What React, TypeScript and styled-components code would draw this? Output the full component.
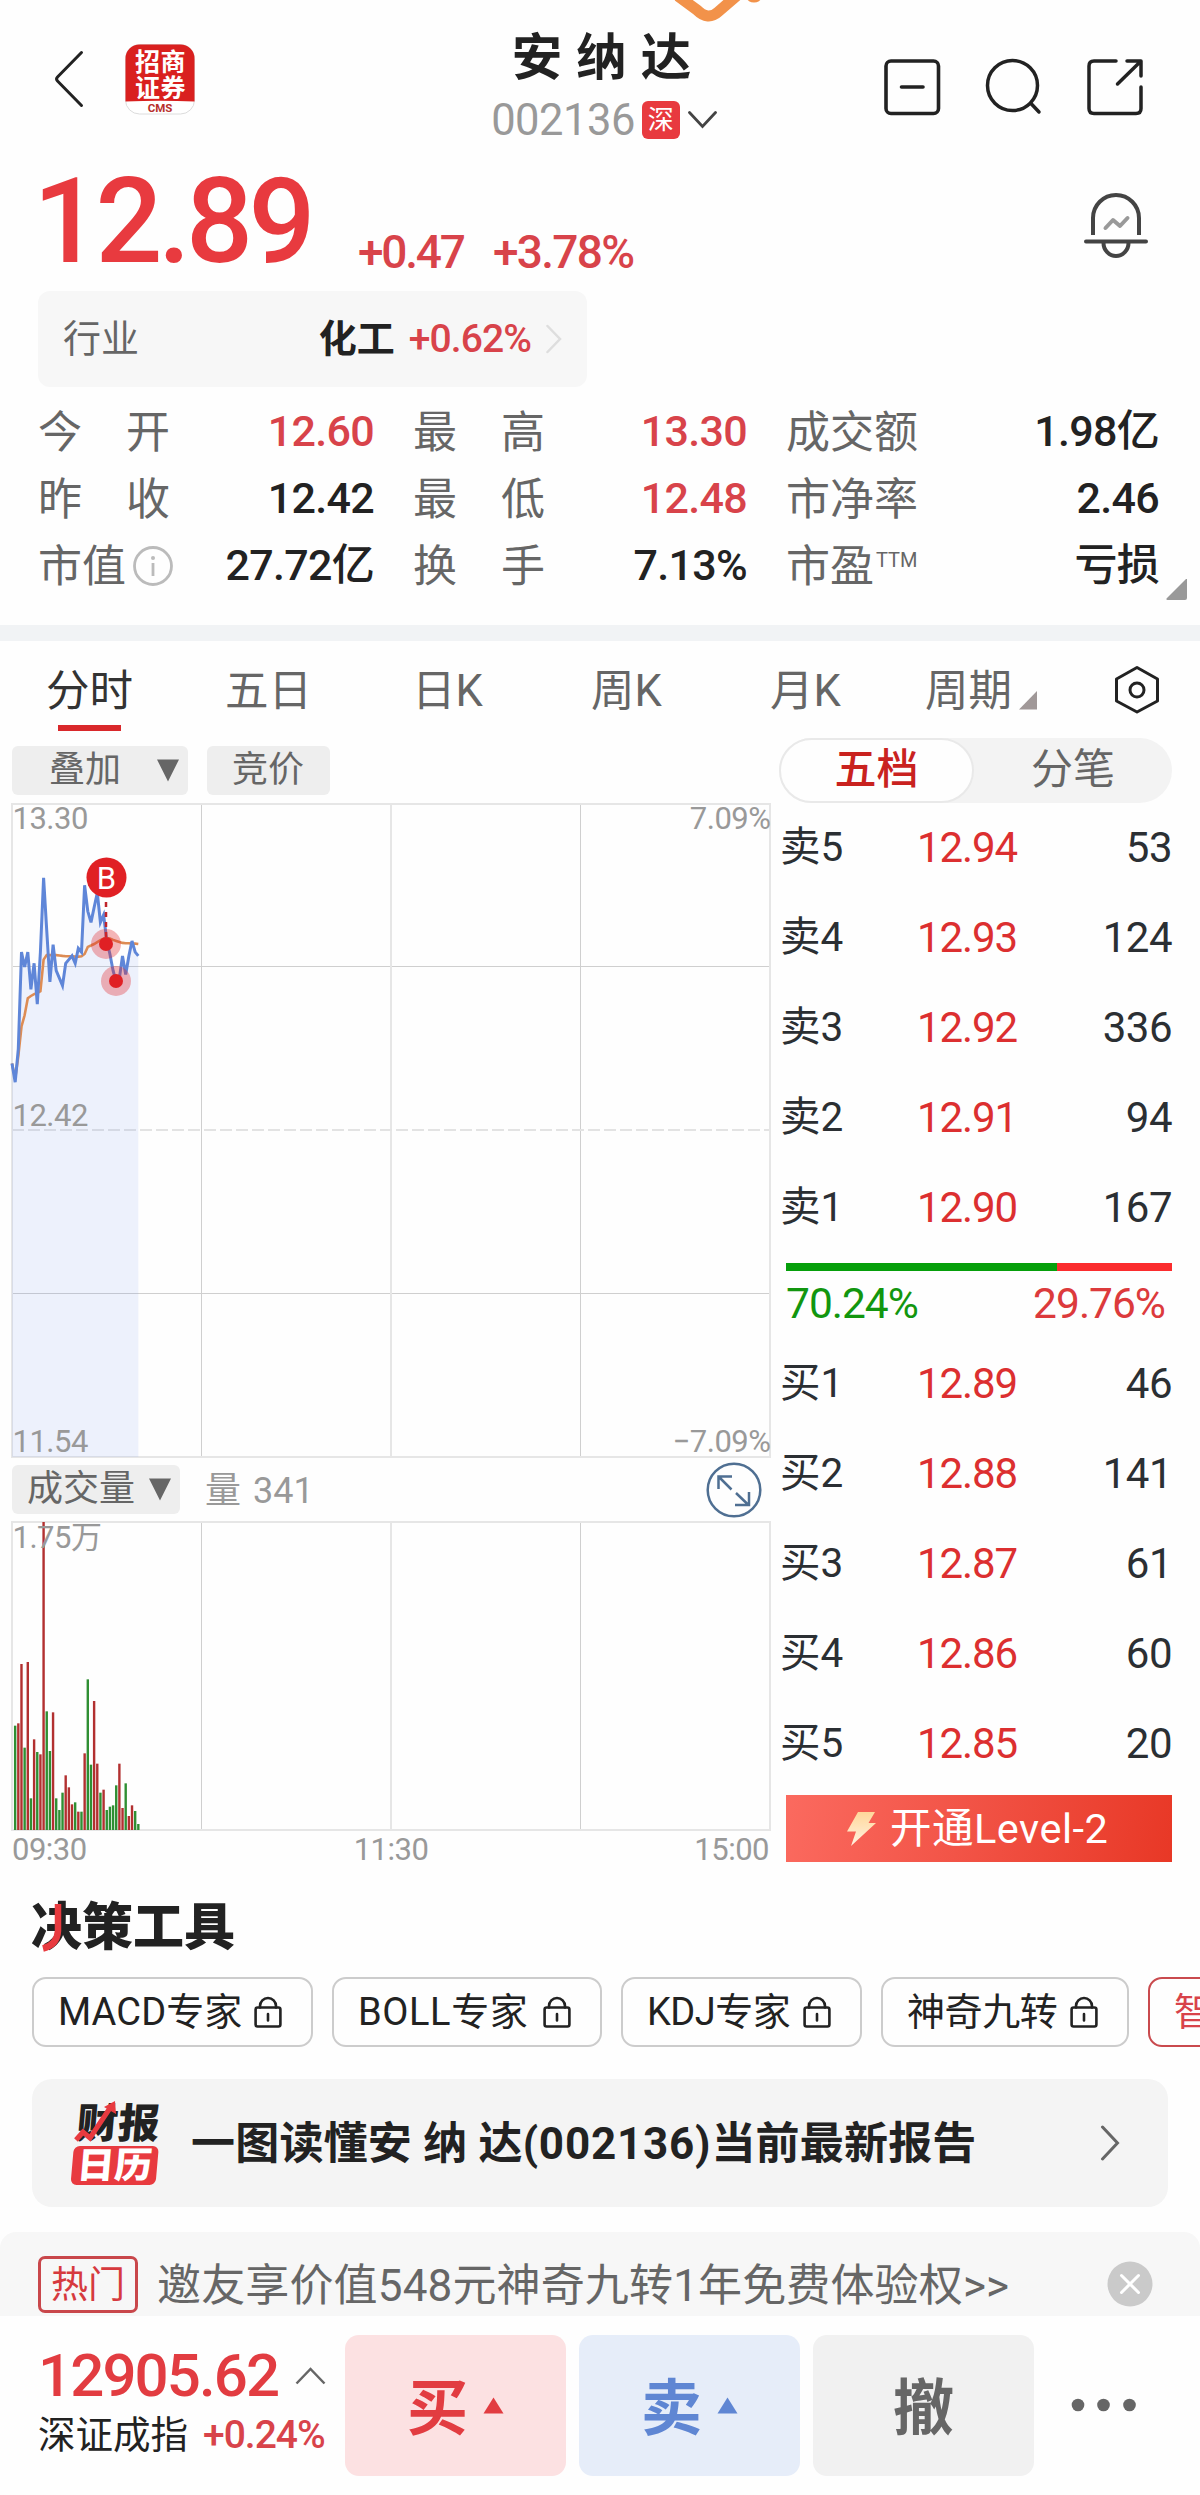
import React from "react";
import styled, { createGlobalStyle, css } from "styled-components";

const RED = "#e83a3f";
const RED_SOFT = "#d8434a";
const INK = "#222222";
const GREY = "#666666";
const MUTED = "#999999";
const FONT = `Roboto, "Noto Sans CJK SC", sans-serif`;

const GlobalStyle = createGlobalStyle`
  body { margin: 0; background: #fefefe; }
  *, *::before, *::after { box-sizing: border-box; }
  svg { display: block; flex: none; }
  svg text { font-family: ${FONT}; }
`;

const Page = styled.main`
  width: 1200px;
  height: 2495px;
  overflow: hidden;
  background: #fefefe;
  color: ${INK};
  font-family: ${FONT};
  display: flex;
  flex-direction: column;
  white-space: nowrap;
`;

/* ---------- header ---------- */

const Header = styled.header`
  position: relative;
  height: 150px;
  display: grid;
  grid-template-columns: 400px 400px 400px;
`;
const Doodle = styled.svg`
  position: absolute;
  left: 670px;
  top: 0;
`;
const HeaderLeft = styled.div`
  display: flex;
  align-items: flex-start;
  padding: 44px 0 0 54px;
  gap: 39px;
`;
const HeaderMid = styled.div`
  display: flex;
  flex-direction: column;
  align-items: center;
  padding: 28px 0 0 3px;
`;
const StockName = styled.h1`
  margin: 0;
  font-size: 50.5px;
  line-height: 60px;
  font-weight: 700;
  word-spacing: 1.5px;
`;
const CodeRow = styled.div`
  display: flex;
  align-items: center;
  height: 63px;
  padding-left: 5px;
`;
const Code = styled.span`
  font-size: 43.5px;
  line-height: 66px;
  padding-top: 3px;
  color: ${MUTED};
  letter-spacing: -0.5px;
`;
const MarketBadge = styled.span`
  width: 38px;
  height: 38px;
  margin: 0 8px 0 7px;
  border-radius: 6px;
  background: ${RED};
  color: #fff;
  font-size: 26px;
  line-height: 38px;
  text-align: center;
`;
const HeaderIcons = styled.div`
  display: flex;
  align-items: flex-start;
  padding: 58px 0 0 83px;
  gap: 43px;
`;

/* ---------- quote ---------- */

const Quote = styled.section`
  height: 141px;
  display: flex;
  align-items: flex-start;
  padding-left: 33px;
  color: ${RED};
`;
const Price = styled.span`
  font-size: 118px;
  line-height: 144px;
  font-weight: 500;
  letter-spacing: -4.6px;
  width: 325px;
`;
const Delta = styled.span<{ $w: number; $ls: number }>`
  font-size: 46px;
  line-height: 60px;
  margin-top: 72px;
  font-weight: 500;
  color: ${RED_SOFT};
  letter-spacing: ${(p) => p.$ls}px;
  width: ${(p) => p.$w}px;
`;
const BellSlot = styled.span`
  margin: 42px 0 0 auto;
  padding-right: 51px;
`;
const Industry = styled.div`
  margin-left: 38px;
  width: 549px;
  height: 96px;
  flex: none;
  border-radius: 12px;
  background: #f7f7f7;
  display: flex;
  align-items: center;
  padding: 0 25px 0 25px;
  font-size: 38px;
  line-height: 60px;
  color: ${GREY};
`;
const IndustryName = styled.b`
  margin-left: auto;
  color: ${INK};
`;
const IndustryPct = styled.span`
  margin: 0 15px 0 14px;
  font-size: 39px;
  font-weight: 500;
  color: ${RED_SOFT};
  letter-spacing: -0.9px;
`;

/* ---------- stats ---------- */

const Stats = styled.section`
  position: relative;
  height: 238px;
  flex: none;
  padding: 11px 0 0 38px;
  display: grid;
  grid-template-columns: 336px 334px 373px;
  grid-template-rows: repeat(3, 67px);
  column-gap: 39px;
`;
const Stat = styled.div`
  display: flex;
  align-items: center;
  justify-content: space-between;
  line-height: 67px;
`;
const StatLabel = styled.span`
  display: flex;
  align-items: center;
  padding-top: 3px;
  font-size: 44px;
  color: ${GREY};
  white-space: pre;
`;
const StatValue = styled.span<{ $up?: boolean }>`
  font-size: 43px;
  font-weight: 500;
  letter-spacing: -0.7px;
  color: ${(p) => (p.$up ? RED_SOFT : INK)};
`;
const Ttm = styled.sup`
  font-size: 20px;
  line-height: 20px;
  margin: -15px 0 0 2px;
  color: ${GREY};
`;
const Corner = styled.svg`
  position: absolute;
  left: 1166px;
  top: 192px;
`;
const Divider = styled.div`
  height: 16px;
  flex: none;
  background: #f1f3f5;
`;

/* ---------- period tabs ---------- */

const Tabs = styled.nav`
  height: 97px;
  flex: none;
  display: flex;
`;
const Tab = styled.div<{ $active?: boolean }>`
  width: 179px;
  height: 90px;
  padding-top: 17px;
  display: flex;
  flex-direction: column;
  align-items: center;
  font-size: 43.5px;
  line-height: 67px;
  color: ${(p) => (p.$active ? "#333" : GREY)};
  ${(p) =>
    p.$active &&
    css`
      &::after {
        content: "";
        width: 63px;
        height: 6px;
        background: #d9282b;
      }
    `}
`;
const TabLine = styled.span`
  display: flex;
  align-items: center;
  margin-left: -7px;
`;
const GearSlot = styled.span`
  margin: 24px 0 0 40px;
`;

/* ---------- chart and order book ---------- */

const Market = styled.section`
  height: 1132px;
  flex: none;
  display: grid;
  grid-template-columns: 778px 422px;
`;
const ChartColumn = styled.div`
  display: flex;
  flex-direction: column;
`;
const ChartBar = styled.div<{ $h: number; $top: number }>`
  height: ${(p) => p.$h}px;
  padding: ${(p) => p.$top}px 0 0 12px;
  display: flex;
  align-items: flex-start;
`;
const Pill = styled.span<{ $w: number; $pad: number }>`
  width: ${(p) => p.$w}px;
  height: 49px;
  padding-left: ${(p) => p.$pad}px;
  border-radius: 6px;
  background: #eeeeee;
  color: ${GREY};
  font-size: 36px;
  line-height: 51px;
  display: flex;
  align-items: center;
  margin-right: 19px;
`;
const VolumeNow = styled.span`
  padding-left: 6px;
  font-size: 36px;
  line-height: 52px;
  color: ${MUTED};
  word-spacing: 3px;
`;
const ExpandSlot = styled.span`
  margin: -3px 16px 0 auto;
`;

const Book = styled.div`
  display: flex;
  flex-direction: column;
  padding-right: 28px;
`;
const Segment = styled.div`
  width: 393px;
  height: 65px;
  margin: 0 0 -1px 1px;
  border-radius: 33px;
  background: #f3f3f3;
  display: flex;
`;
const SegmentItem = styled.span<{ $active?: boolean }>`
  width: ${(p) => (p.$active ? 195 : 198)}px;
  height: 65px;
  border-radius: 33px;
  text-align: center;
  font-size: 42px;
  line-height: 63px;
  color: ${GREY};
  ${(p) =>
    p.$active &&
    css`
      background: #fefefe;
      border: 2px solid #e9e9e9;
      color: #c9221f;
      font-weight: 500;
      line-height: 60px;
    `}
`;
const BookRow = styled.div`
  height: 90px;
  display: grid;
  grid-template-columns: 137px 130px 1fr;
  padding-left: 2px;
  font-size: 42px;
  line-height: 91px;
  letter-spacing: -1.1px;
  color: #2b2f33;
`;
const BookSide = styled.span`
  font-size: 40.5px;
  letter-spacing: 0;
`;
const BookPrice = styled.span`
  color: #dc2f30;
`;
const BookQty = styled.span`
  text-align: right;
  letter-spacing: -0.5px;
`;
const RatioBar = styled.div`
  display: flex;
  height: 8px;
  margin: 11px 0 0 8px;
  background: #fb2c2e;
`;
const RatioFill = styled.span`
  background: #069f0b;
`;
const RatioText = styled.div`
  height: 67px;
  display: flex;
  justify-content: space-between;
  padding: 0 7px 0 8px;
  font-size: 42.5px;
  line-height: 66px;
  letter-spacing: -1px;
  color: #dc3a3c;
`;
const RatioGreen = styled.span`
  color: #12960f;
`;
const LevelTwo = styled.div`
  margin: 7px 0 0 8px;
  height: 67px;
  background: linear-gradient(100deg, #fb6a5f 0%, #f25447 45%, #e83826 100%);
  color: #fff;
  font-size: 41.5px;
  line-height: 69px;
  letter-spacing: 0.5px;
  display: flex;
  align-items: center;
  padding-left: 60px;
  gap: 13px;
`;

/* ---------- tools ---------- */

const ToolsTitle = styled.h2`
  position: relative;
  margin: 0;
  height: 107px;
  flex: none;
  padding: 28px 0 0 31px;
  font-size: 51px;
  line-height: 60px;
  font-weight: 900;
`;
const TitleStroke = styled.svg`
  position: absolute;
  left: 38px;
  top: 33px;
`;
const Chips = styled.div`
  height: 102px;
  flex: none;
  display: flex;
  gap: 19px;
  padding-left: 32px;
`;
const Chip = styled.span<{ $w: number; $ls?: number; $hot?: boolean }>`
  flex: none;
  width: ${(p) => p.$w}px;
  height: 70px;
  border: 2px solid ${(p) => (p.$hot ? "#c94a4e" : "#cccccc")};
  border-radius: 14px;
  display: flex;
  align-items: center;
  justify-content: space-between;
  padding: 0 29px 0 24px;
  font-size: 38px;
  line-height: 69px;
  letter-spacing: ${(p) => p.$ls ?? -0.4}px;
  color: ${(p) => (p.$hot ? RED_SOFT : INK)};
`;
const Report = styled.div`
  width: 1136px;
  height: 128px;
  flex: none;
  margin: 0 0 25px 32px;
  padding: 0 48px 0 38px;
  border-radius: 20px;
  background: #f4f4f4;
  display: flex;
  align-items: center;
`;
const ReportText = styled.b`
  margin-left: 27px;
  padding-top: 2px;
  flex: 1;
  font-size: 44px;
  line-height: 128px;
  font-weight: 700;
  letter-spacing: 0.2px;
`;
const ReportCode = styled.span`
  letter-spacing: 0.8px;
`;

/* ---------- promo and bottom bar ---------- */

const Promo = styled.div`
  height: 84px;
  flex: none;
  border-radius: 16px 16px 0 0;
  background: #f7f7f7;
  display: flex;
  align-items: flex-start;
  padding: 24px 47px 0 38px;
`;
const HotTag = styled.span`
  width: 100px;
  height: 57px;
  border: 3px solid #c9474b;
  border-radius: 7px;
  color: #d63a3e;
  font-size: 37px;
  line-height: 53px;
  text-align: center;
`;
const PromoText = styled.span`
  flex: 1;
  margin-left: 19px;
  font-size: 44px;
  line-height: 60px;
  letter-spacing: 0.15px;
  color: ${GREY};
`;
const PromoClose = styled.span`
  margin-top: 5px;
`;
const BottomBar = styled.footer`
  height: 179px;
  flex: none;
  display: flex;
  padding: 19px 0 0 38px;
`;
const IndexBlock = styled.div`
  width: 307px;
  display: flex;
  flex-direction: column;
`;
const IndexValue = styled.div`
  height: 82px;
  display: flex;
  align-items: center;
  justify-content: space-between;
  padding-right: 19px;
  color: #e23c41;
  font-size: 60px;
  line-height: 84px;
  font-weight: 500;
  letter-spacing: -1.9px;
`;
const IndexName = styled.div`
  display: flex;
  align-items: center;
  gap: 15px;
  font-size: 37.5px;
  line-height: 36px;
`;
const IndexPct = styled.span`
  font-size: 39px;
  font-weight: 500;
  letter-spacing: -1px;
  color: ${RED_SOFT};
`;
const Action = styled.span<{ $bg: string; $fg: string }>`
  width: 221px;
  height: 141px;
  margin-right: 13px;
  border-radius: 14px;
  background: ${(p) => p.$bg};
  color: ${(p) => p.$fg};
  display: flex;
  align-items: center;
  justify-content: center;
  gap: 15px;
  font-size: 61px;
  line-height: 138px;
  font-weight: 700;
`;
const ActionLabel = styled.span`
  padding-top: 6px;
`;
const More = styled.span`
  margin: 63px 0 0 23px;
`;

/* ---------- icons ---------- */

const Lock = () => (
  <svg width="28" height="32" viewBox="0 0 28 32" fill="none" stroke={INK} strokeWidth="2.6" strokeLinecap="round">
    <rect x="1.6" y="11.5" width="24.8" height="19" rx="2" />
    <path d="M6 11.5V10a8 8 0 0 1 16 0v1.5M14 18v6.5" />
  </svg>
);

const DownSvg = styled.svg<{ $ml: number }>`
  margin-left: ${(p) => p.$ml}px;
`;
const DownTriangle = ({ ml }: { ml: number }) => (
  <DownSvg $ml={ml} width="22" height="23" viewBox="0 0 22 23">
    <path d="M0 0.5H22L11 22.5Z" fill="#666" />
  </DownSvg>
);

const UpTriangle = ({ color }: { color: string }) => (
  <svg width="21" height="17" viewBox="0 0 21 17">
    <path d="M10.5 0.5L20.5 16.5H0.5Z" fill={color} />
  </svg>
);

const BrandLogo = () => (
  <svg width="70" height="71" viewBox="0 0 70 71">
    <rect x="0.5" y="0.5" width="69" height="69.5" rx="14" fill="#fff" stroke="#dcdcdc" />
    <path d="M0.5 57.5V14.5A14 14 0 0 1 14.5 0.5H55.5A14 14 0 0 1 69.5 14.5V57.5Q35 56 0.5 57.5Z" fill="#d9201f" />
    <g fill="#fff" fontWeight="700" fontSize="25">
      <text x="10" y="27">招</text>
      <text x="35.5" y="27">商</text>
      <text x="10" y="53">证</text>
      <text x="35.5" y="53">券</text>
    </g>
    <text x="35" y="67.5" fill="#b8302c" fontSize="11.5" fontWeight="700" textAnchor="middle">CMS</text>
  </svg>
);

const ReportLogo = () => (
  <svg width="94" height="88" viewBox="0 0 94 88">
    <g transform="skewX(-5)">
      <text x="9" y="39" fontSize="41" fontWeight="900" fill={INK} textLength="83" lengthAdjust="spacingAndGlyphs">财报</text>
      <rect x="8" y="47" width="85" height="39" rx="6" fill={RED} />
      <text x="13" y="79.5" fontSize="36" fontWeight="900" fill="#fff" textLength="75" lengthAdjust="spacingAndGlyphs">日历</text>
    </g>
    <path d="M6 41L13 33L20 39L40 9" fill="none" stroke={RED} strokeWidth="5" />
    <path d="M34 8L45 2L46 15Z" fill={RED} />
  </svg>
);

/* ---------- chart data ---------- */

const prices = [
  12.6, 12.55, 12.64, 12.9, 12.86, 12.9, 12.8, 12.87, 12.76, 12.9, 13.1, 12.96, 12.82, 12.92, 12.85, 12.83, 12.81,
  12.87, 12.88, 12.89, 12.87, 12.91, 12.9, 13.08, 13.01, 12.98, 13.02, 13.06, 12.98, 13.0, 12.93, 12.895, 12.85,
  12.82, 12.83, 12.89, 12.84, 12.89, 12.93, 12.9, 12.89,
];
const averages = [
  12.6, 12.56, 12.62, 12.7, 12.73, 12.776, 12.782, 12.787, 12.79, 12.795, 12.88, 12.892, 12.892, 12.892, 12.892,
  12.891, 12.89, 12.889, 12.889, 12.889, 12.888, 12.888, 12.889, 12.895, 12.914, 12.918, 12.922, 12.927, 12.932,
  12.936, 12.938, 12.937, 12.933, 12.93, 12.927, 12.925, 12.924, 12.924, 12.923, 12.923, 12.922,
];
const volumes: [number, "r" | "g"][] = [
  [313, "g"], [320, "r"], [498, "r"], [247, "g"], [504, "r"], [95, "g"], [272, "r"], [234, "g"], [227, "r"],
  [924, "r"], [356, "g"], [237, "g"], [353, "r"], [95, "g"], [60, "g"], [112, "g"], [164, "r"], [128, "r"],
  [77, "r"], [83, "g"], [55, "r"], [55, "g"], [230, "r"], [452, "g"], [196, "g"], [387, "r"], [199, "r"],
  [112, "g"], [121, "r"], [60, "g"], [70, "g"], [74, "g"], [134, "g"], [199, "r"], [66, "r"], [140, "g"],
  [42, "r"], [74, "r"], [57, "g"], [18, "g"],
];

const LEFT = 12;
const RIGHT = 770;
const STEP = (RIGHT - LEFT) / 240;
const px = (i: number) => LEFT + STEP * i;
const py = (v: number) => 0.5 + (13.3 - v) * 371.6;
const line = (data: number[]) => data.map((v, i) => `${px(i).toFixed(1)},${py(v).toFixed(1)}`).join(" ");

const PriceChart = () => (
  <svg width="778" height="656" viewBox="0 0 778 656">
    <g fill="none">
      <path d="M201.5 0V654M580.5 0V654M12 163.5H770M12 490.5H770" stroke="#cfcfcf" strokeWidth="1" />
      <path d="M391 0V654" stroke="#e6e6e6" strokeWidth="2" />
      <path d="M12 327H770" stroke="#e3e3e3" strokeWidth="2" strokeDasharray="12 4" />
      <rect x="12" y="1" width="758" height="653" stroke="#e6e6e6" strokeWidth="2" />
    </g>
    <polygon points={`${LEFT},654 ${line(prices)} ${px(40)},654`} fill="#7095f0" fillOpacity="0.12" />
    <polyline points={line(averages)} fill="none" stroke="#dd8c54" strokeWidth="2.6" />
    <polyline points={line(prices)} fill="none" stroke="#5f86d8" strokeWidth="3" />
    <path d="M106 99V141" stroke="#c0242a" strokeWidth="2.5" strokeDasharray="5 5" />
    <g fill="#e02024">
      <circle cx="106" cy="141" r="15" opacity="0.33" />
      <circle cx="106" cy="141" r="7" />
      <circle cx="116" cy="178" r="15" opacity="0.33" />
      <circle cx="116" cy="178" r="7" />
      <circle cx="106.5" cy="74.5" r="20" />
    </g>
    <text x="106.5" y="85.5" fontSize="31" fill="#fff" textAnchor="middle">B</text>
    <g fill={MUTED} fontSize="31" letterSpacing="-0.5">
      <text x="12.5" y="26">13.30</text>
      <text x="12.5" y="323">12.42</text>
      <text x="12.5" y="649">11.54</text>
      <text x="770.5" y="26" textAnchor="end">7.09%</text>
      <text x="770.5" y="649" textAnchor="end">−7.09%</text>
    </g>
  </svg>
);

const VolumeChart = () => (
  <svg width="778" height="349" viewBox="0 0 778 349">
    <path d="M201.5 1V309M580.5 1V309" stroke="#cfcfcf" strokeWidth="1" />
    <path d="M391 1V309" stroke="#e6e6e6" strokeWidth="2" />
    <rect x="12" y="1" width="758" height="308" fill="none" stroke="#e6e6e6" strokeWidth="2" />
    {volumes.map(([v, side], i) => (
      <rect
        key={i}
        x={px(i + 1) - 1.2}
        y={309 - v / 3}
        width="2.4"
        height={v / 3}
        fill={side === "r" ? "#b23030" : "#2f8f33"}
      />
    ))}
    <g fill={MUTED} fontSize="31" letterSpacing="-0.5">
      <text x="12.5" y="27">1.75万</text>
      <text x="12" y="339">09:30</text>
      <text x="391" y="339" textAnchor="middle">11:30</text>
      <text x="769" y="339" textAnchor="end">15:00</text>
    </g>
  </svg>
);

/* ---------- content ---------- */

const asks = [["卖5", "12.94", "53"], ["卖4", "12.93", "124"], ["卖3", "12.92", "336"], ["卖2", "12.91", "94"], ["卖1", "12.90", "167"]];
const bids = [["买1", "12.89", "46"], ["买2", "12.88", "141"], ["买3", "12.87", "61"], ["买4", "12.86", "60"], ["买5", "12.85", "20"]];

const BookRows = ({ rows }: { rows: string[][] }) => (
  <>
    {rows.map(([side, price, qty]) => (
      <BookRow key={side}>
        <BookSide>{side}</BookSide>
        <BookPrice>{price}</BookPrice>
        <BookQty>{qty}</BookQty>
      </BookRow>
    ))}
  </>
);

const tools: [string, number, number][] = [
  ["MACD专家", 281, 0.1],
  ["BOLL专家", 270, 0.6],
  ["KDJ专家", 241, -0.5],
  ["神奇九转", 248, -0.4],
];

export default function App() {
  return (
    <Page>
      <GlobalStyle />
      <Header>
        <Doodle width="96" height="24" viewBox="0 0 96 24">
          <path d="M8 -4L27 10Q38 21 48 12L70 -7" fill="none" stroke="#f2924a" strokeWidth="11" strokeLinejoin="round" />
          <ellipse cx="84" cy="-2" rx="7" ry="4.5" fill="#f2924a" />
        </Doodle>
        <HeaderLeft>
          <svg width="32" height="70" viewBox="0 0 32 70" fill="none" stroke={INK} strokeWidth="3" strokeLinecap="round" strokeLinejoin="round">
            <path d="M27.5 8.5L3.5 33Q1.5 35 3.5 37L27.5 61.5" />
          </svg>
          <BrandLogo />
        </HeaderLeft>
        <HeaderMid>
          <StockName>安 纳 达</StockName>
          <CodeRow>
            <Code>002136</Code>
            <MarketBadge>深</MarketBadge>
            <svg width="29" height="18" viewBox="0 0 29 18" fill="none" stroke="#444" strokeWidth="2.8" strokeLinecap="round">
              <path d="M1.5 1.5L14.5 15.5L27.5 1.5" />
            </svg>
          </CodeRow>
        </HeaderMid>
        <HeaderIcons>
          <svg width="58" height="58" viewBox="0 0 58 58" fill="none" stroke={INK} strokeWidth="3.6" strokeLinecap="round">
            <rect x="3" y="3" width="52.5" height="52.5" rx="5" />
            <path d="M18.5 29H40" />
          </svg>
          <svg width="59" height="58" viewBox="0 0 59 58" fill="none" stroke={INK} strokeWidth="3.5" strokeLinecap="round">
            <circle cx="28.5" cy="27.5" r="25" />
            <path d="M47 45.5L55 54" />
          </svg>
          <svg width="58" height="58" viewBox="0 0 58 58" fill="none" stroke={INK} strokeWidth="3.5" strokeLinecap="round" strokeLinejoin="round">
            <path d="M30 3H8Q3 3 3 8V50.5Q3 55.5 8 55.5H50Q55 55.5 55 50.5V29M41 3H55V18M54 4L31.5 26" />
          </svg>
        </HeaderIcons>
      </Header>

      <Quote>
        <Price>12.89</Price>
        <Delta $w={135} $ls={-2.2}>+0.47</Delta>
        <Delta $w={160} $ls={-1.7}>+3.78%</Delta>
        <BellSlot>
          <svg width="66" height="68" viewBox="0 0 66 68" fill="none" strokeLinecap="round">
            <path d="M10 43V26A23 23 0 0 1 56 26V43" stroke="#444" strokeWidth="4" strokeLinecap="butt" />
            <path d="M3 49.5H63M20.5 51A12.5 13 0 0 0 45.5 51" stroke="#444" strokeWidth="4" />
            <path d="M22.5 36L30 28L37 34L44.5 26" stroke="#999" strokeWidth="4" strokeLinejoin="round" />
          </svg>
        </BellSlot>
      </Quote>

      <Industry>
        <span>行业</span>
        <IndustryName>化工</IndustryName>
        <IndustryPct>+0.62%</IndustryPct>
        <svg width="16" height="30" viewBox="0 0 16 30" fill="none" stroke="#dedede" strokeWidth="2.5" strokeLinecap="round">
          <path d="M1.5 2L14 15L1.5 28" />
        </svg>
      </Industry>

      <Stats>
        <Stat><StatLabel>今　开</StatLabel><StatValue $up>12.60</StatValue></Stat>
        <Stat><StatLabel>最　高</StatLabel><StatValue $up>13.30</StatValue></Stat>
        <Stat><StatLabel>成交额</StatLabel><StatValue>1.98亿</StatValue></Stat>
        <Stat><StatLabel>昨　收</StatLabel><StatValue>12.42</StatValue></Stat>
        <Stat><StatLabel>最　低</StatLabel><StatValue $up>12.48</StatValue></Stat>
        <Stat><StatLabel>市净率</StatLabel><StatValue>2.46</StatValue></Stat>
        <Stat>
          <StatLabel>
            市值
            <svg width="48" height="42" viewBox="-7 1 48 42" fill="none" stroke="#bbb" strokeWidth="2.8">
              <circle cx="20" cy="21" r="18.5" />
              <path d="M20 18V31" />
              <circle cx="20" cy="13" r="2" fill="#bbb" stroke="none" />
            </svg>
          </StatLabel>
          <StatValue>27.72亿</StatValue>
        </Stat>
        <Stat><StatLabel>换　手</StatLabel><StatValue>7.13%</StatValue></Stat>
        <Stat><StatLabel>市盈<Ttm>TTM</Ttm></StatLabel><StatValue>亏损</StatValue></Stat>
        <Corner width="21" height="21" viewBox="0 0 21 21">
          <path d="M21 0V19Q21 21 19 21H1.5Q0 21 0.5 19.5L20 0Z" fill="#999" />
        </Corner>
      </Stats>
      <Divider />

      <Tabs>
        <Tab $active>分时</Tab>
        <Tab>五日</Tab>
        <Tab>日K</Tab>
        <Tab>周K</Tab>
        <Tab>月K</Tab>
        <Tab>
          <TabLine>
            周期
            <svg width="25" height="40" viewBox="0 0 25 40"><path d="M25 19V37.5H7Z" fill="#a09898" /></svg>
          </TabLine>
        </Tab>
        <GearSlot>
          <svg width="46" height="50" viewBox="0 0 46 50" fill="none" stroke={INK} strokeWidth="3" strokeLinejoin="round">
            <path d="M23 2.5L43.5 14V36L23 47L2.5 36V14Z" />
            <circle cx="23" cy="25" r="7" />
          </svg>
        </GearSlot>
      </Tabs>

      <Market>
        <ChartColumn>
          <ChartBar $h={65} $top={8}>
            <Pill $w={176} $pad={37}>叠加<DownTriangle ml={36} /></Pill>
            <Pill $w={123} $pad={25}>竞价</Pill>
          </ChartBar>
          <PriceChart />
          <ChartBar $h={62} $top={6}>
            <Pill $w={168} $pad={15}>成交量<DownTriangle ml={14} /></Pill>
            <VolumeNow>量 341</VolumeNow>
            <ExpandSlot>
              <svg width="56" height="56" viewBox="0 0 56 56" fill="none" stroke="#4f6f92" strokeWidth="2.5">
                <circle cx="28" cy="28" r="26.3" />
                <path d="M12.5 27V14.5H26M13 15L25.5 27.5M30 31L42.5 43M43 30V43H29" />
              </svg>
            </ExpandSlot>
          </ChartBar>
          <VolumeChart />
        </ChartColumn>

        <Book>
          <Segment>
            <SegmentItem $active>五档</SegmentItem>
            <SegmentItem>分笔</SegmentItem>
          </Segment>
          <BookRows rows={asks} />
          <RatioBar><RatioFill style={{ width: "70.24%" }} /></RatioBar>
          <RatioText><RatioGreen>70.24%</RatioGreen><span>29.76%</span></RatioText>
          <BookRows rows={bids} />
          <LevelTwo>
            <svg width="31" height="36" viewBox="0 0 31 36">
              <defs>
                <linearGradient id="bolt" x1="0" y1="0" x2="0" y2="1">
                  <stop offset="0" stopColor="#ffd79a" />
                  <stop offset="1" stopColor="#fff3e2" />
                </linearGradient>
              </defs>
              <path d="M12 1H29L22.5 12H30L5 35L10 20.5H1Z" fill="url(#bolt)" />
            </svg>
            开通Level-2
          </LevelTwo>
        </Book>
      </Market>

      <ToolsTitle>
        决策工具
        <TitleStroke width="30" height="52" viewBox="0 0 30 52">
          <path d="M20 1V28Q19 42 5 45.5" fill="none" stroke={RED} strokeWidth="6.5" />
        </TitleStroke>
      </ToolsTitle>
      <Chips>
        {tools.map(([name, w, ls]) => (
          <Chip key={name} $w={w} $ls={ls}>{name}<Lock /></Chip>
        ))}
        <Chip $w={248} $hot>智能盯盘</Chip>
      </Chips>

      <Report>
        <ReportLogo />
        <ReportText>一图读懂安 纳 达<ReportCode>(002136)</ReportCode>当前最新报告</ReportText>
        <svg width="20" height="36" viewBox="0 0 20 36" fill="none" stroke="#666" strokeWidth="3" strokeLinecap="round">
          <path d="M2.5 2L17.5 18L2.5 34" />
        </svg>
      </Report>

      <Promo>
        <HotTag>热门</HotTag>
        <PromoText>邀友享价值548元神奇九转1年免费体验权&gt;&gt;</PromoText>
        <PromoClose>
          <svg width="46" height="46" viewBox="0 0 46 46">
            <circle cx="23" cy="23" r="22.5" fill="#cacaca" />
            <path d="M14.5 14.5L31.5 31.5M31.5 14.5L14.5 31.5" stroke="#fff" strokeWidth="3" strokeLinecap="round" />
          </svg>
        </PromoClose>
      </Promo>

      <BottomBar>
        <IndexBlock>
          <IndexValue>
            12905.62
            <svg width="31" height="18" viewBox="0 0 31 18" fill="none" stroke="#666" strokeWidth="2.5">
              <path d="M1.5 16.5L15.5 2L29.5 16.5" />
            </svg>
          </IndexValue>
          <IndexName>深证成指<IndexPct>+0.24%</IndexPct></IndexName>
        </IndexBlock>
        <Action $bg="#fce1e2" $fg="#e23c41"><ActionLabel>买</ActionLabel><UpTriangle color="#e23c41" /></Action>
        <Action $bg="#e6edf9" $fg="#5f86d3"><ActionLabel>卖</ActionLabel><UpTriangle color="#5f86d3" /></Action>
        <Action $bg="#f1f1f1" $fg="#666"><ActionLabel>撤</ActionLabel></Action>
        <More>
          <svg width="68" height="14" viewBox="0 0 68 14" fill="#666">
            <circle cx="8" cy="7" r="6.3" />
            <circle cx="33.5" cy="7" r="6.3" />
            <circle cx="59.5" cy="7" r="6.3" />
          </svg>
        </More>
      </BottomBar>
    </Page>
  );
}
